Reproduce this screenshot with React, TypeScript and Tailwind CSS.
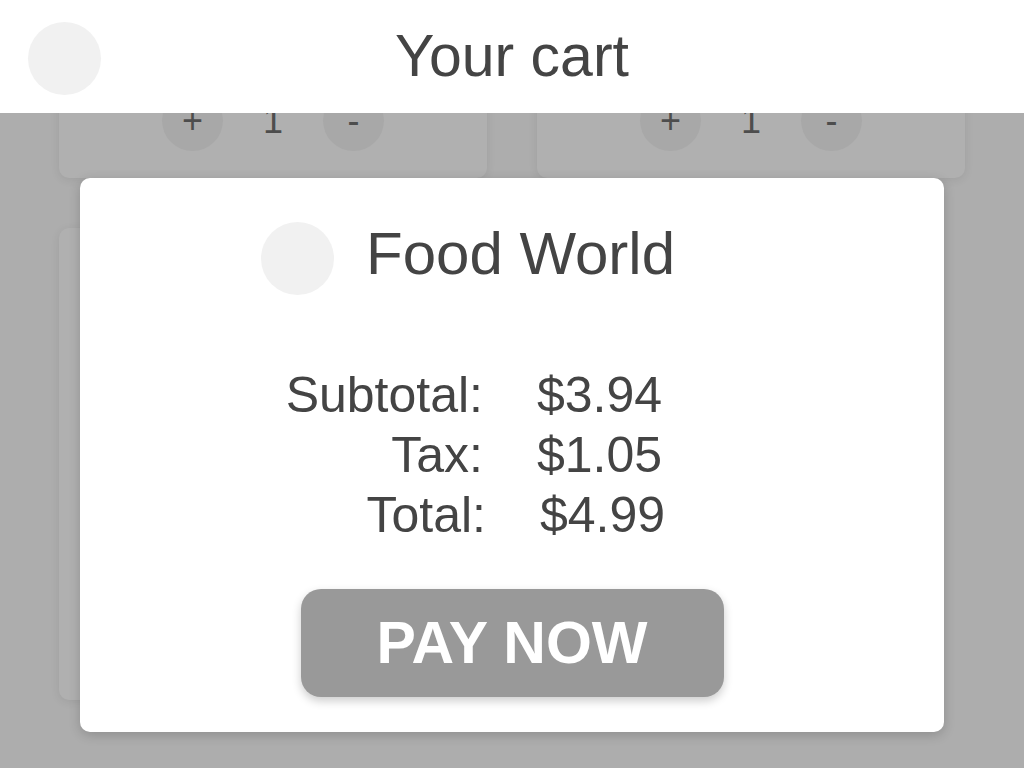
const items = [{ id: 1 }, { id: 2 }];

function Stepper() {
  return (
    <div className="flex items-center justify-center text-[36px] leading-none text-[#4d4d4d]">
      <span className="flex h-[61px] w-[61px] items-center justify-center rounded-full bg-[#a8a8a8]">+</span>
      <span className="w-[100px] text-center">1</span>
      <span className="flex h-[61px] w-[61px] items-center justify-center rounded-full bg-[#a8a8a8]">-</span>
    </div>
  );
}

export default function App() {
  return (
    <div className="relative h-[768px] w-[1024px] overflow-hidden bg-[#adadad] font-['Liberation_Sans',Arial,sans-serif] text-[#444]">
      <header className="relative z-20 grid h-[113px] grid-cols-[1fr_auto_1fr] items-center bg-white">
        <div className="pl-[28px]">
          <div className="mt-[4px] h-[73px] w-[73px] rounded-full bg-[#f1f1f1]" />
        </div>
        <h1 className="text-[59px]">Your cart</h1>
        <div />
      </header>

      <main className="grid grid-cols-2 gap-[50px] px-[59px]">
        {items.map((item) => (
          <div
            key={item.id}
            className="mt-[-175px] flex h-[240px] flex-col justify-end rounded-[10px] bg-[#b0b0b0] pb-[27px] shadow-[0_2px_10px_rgba(0,0,0,0.08)]"
          >
            <Stepper />
          </div>
        ))}
        <div className="h-[472px] rounded-[10px] bg-[#b0b0b0] shadow-[0_2px_10px_rgba(0,0,0,0.08)]" />
      </main>

      <div className="absolute left-[80px] top-[178px] z-10 flex w-[864px] flex-col rounded-[10px] bg-white pb-[35px] pt-[42px] shadow-[0_3px_12px_rgba(0,0,0,0.18)]">
        <div className="flex items-start gap-[32px] pl-[181px]">
          <div className="mt-[2px] h-[73px] w-[73px] rounded-full bg-[#f1f1f1]" />
          <h2 className="text-[60px] leading-[68px]">Food World</h2>
        </div>

        <div className="mt-[70px] flex flex-col pl-[183px] text-[50px] leading-[60px]">
          <div className="flex gap-[54px]">
            <span className="w-[220px] text-right">Subtotal:</span>
            <span>$3.94</span>
          </div>
          <div className="flex gap-[54px]">
            <span className="w-[220px] text-right">Tax:</span>
            <span>$1.05</span>
          </div>
          <div className="flex gap-[54px] pl-[3px]">
            <span className="w-[220px] text-right">Total:</span>
            <span>$4.99</span>
          </div>
        </div>

        <button className="mx-auto mt-[44px] h-[108px] w-[423px] rounded-[20px] bg-[#999999] text-[59px] font-bold text-white shadow-[0_4px_10px_rgba(0,0,0,0.2)]">
          PAY NOW
        </button>
      </div>
    </div>
  );
}
